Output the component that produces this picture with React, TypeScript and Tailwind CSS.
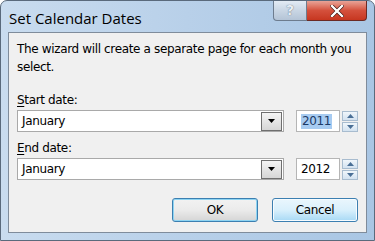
import React from 'react';

// Windows 7 style dialog: "Set Calendar Dates"

const Arrow = ({ up = false, color = '#000' }: { up?: boolean; color?: string }) => (
  <svg width="7" height="4" viewBox="0 0 7 4" className="block">
    <path d={up ? 'M0 4 L3.5 0 L7 4 Z' : 'M0 0 L7 0 L3.5 4 Z'} fill={color} />
  </svg>
);

const Combo = ({ value }: { value: string }) => (
  <div className="flex h-[22px] w-[268px] items-center border border-[#a9a9a9] bg-white pl-[4px] pr-[1px]">
    <span className="flex-1 text-[12px] text-black">{value}</span>
    <div className="flex h-[19px] w-[21px] items-center justify-center border border-[#6f6f6f] bg-gradient-to-b from-[#f4f4f4] to-[#d6d6d6]">
      <Arrow />
    </div>
  </div>
);

const YearSpin = ({ value, selected = false }: { value: string; selected?: boolean }) => (
  <div className="flex items-center gap-[2px]">
    <div className="flex h-[22px] w-[44px] items-center border border-[#b5b5b5] bg-white pl-[4px]">
      <span className={`text-[12px] leading-[15px] ${selected ? 'bg-[#a7cbf1] px-[1px] text-[#1c3a66]' : 'text-black'}`}>
        {value}
      </span>
    </div>
    <div className="flex flex-col gap-[1px]">
      <div className="flex h-[10px] w-[16px] items-center justify-center border border-[#a8bccf] bg-gradient-to-b from-[#f0f6fb] to-[#d3e2f0]">
        <Arrow up color="#4a6f96" />
      </div>
      <div className="flex h-[10px] w-[16px] items-center justify-center border border-[#a8bccf] bg-gradient-to-b from-[#f0f6fb] to-[#d3e2f0]">
        <Arrow color="#4a6f96" />
      </div>
    </div>
  </div>
);

export default function App() {
  return (
    <div
      className="flex h-[241px] w-[375px] flex-col overflow-hidden rounded-t-[7px] border border-[#5a6a7c] bg-gradient-to-r from-[#c9dcef] via-[#b8d0e9] to-[#a9c6e4]"
      style={{ fontFamily: '"DejaVu Sans", Tahoma, sans-serif' }}
    >
      {/* title bar */}
      <div className="flex h-[31px] shrink-0 items-start">
        <div
          className="pl-[8px] pt-[8px] text-[15px] leading-[18px] text-black"
          style={{ fontFamily: '"Open Sans", "Noto Sans", sans-serif' }}
        >
          Set Calendar Dates
        </div>
        <div className="ml-auto mr-[7px] flex">
          <div className="flex h-[20px] w-[34px] items-center justify-center rounded-bl-[4px] border border-t-0 border-[#6d7c8e] bg-gradient-to-b from-[#e3ebf4] via-[#c9d6e4] to-[#b4c4d6] text-[14px] font-bold text-[#e8eef5] [text-shadow:0_0_1px_#3c4a5c]">
            ?
          </div>
          <div className="flex h-[20px] w-[60px] items-center justify-center rounded-br-[4px] border border-l-0 border-t-0 border-[#6b2a24] bg-gradient-to-b from-[#e8a397] via-[#d4503c] to-[#c6361f]">
            <svg width="14" height="12" viewBox="0 0 14 12">
              <path d="M2 1 L12 11 M12 1 L2 11" stroke="#3a1410" strokeWidth="3.6" strokeLinecap="square" />
              <path d="M2 1 L12 11 M12 1 L2 11" stroke="#fff" strokeWidth="2.4" strokeLinecap="square" />
            </svg>
          </div>
        </div>
      </div>

      {/* client area */}
      <div className="mx-[7px] mb-[7px] flex flex-1 flex-col border border-[#7f8c9b] bg-[#f0f0f0] px-[8px] pt-[7px] text-[12px] leading-[18px] text-black tracking-[-0.35px]">
        <p>The wizard will create a separate page for each month you select.</p>

        <div className="mt-[15px]">
          <span className="underline underline-offset-2">S</span>tart date:
        </div>
        <div className="mt-[1px] flex items-center">
          <Combo value="January" />
          <div className="ml-[12px]">
            <YearSpin value="2011" selected />
          </div>
        </div>

        <div className="mt-[7px]">
          <span className="underline underline-offset-2">E</span>nd date:
        </div>
        <div className="mt-[1px] flex items-center">
          <Combo value="January" />
          <div className="ml-[12px]">
            <YearSpin value="2012" />
          </div>
        </div>

        <div className="mt-[18px] flex justify-end gap-[14px]">
          <button className="h-[24px] w-[86px] rounded-[3px] border border-[#3c7fb1] bg-gradient-to-b from-[#f2f2f2] via-[#ebebeb] to-[#d5d5d5] text-[12px] text-black shadow-[inset_0_0_0_1px_#8ed4f2]">
            OK
          </button>
          <button className="h-[24px] w-[86px] rounded-[3px] border border-[#3c7fb1] bg-gradient-to-b from-[#eaf6fd] via-[#d9f0fc] to-[#a7d9f5] text-[12px] text-black shadow-[inset_0_0_0_1px_#f7fcff]">
            Cancel
          </button>
        </div>
      </div>
    </div>
  );
}
